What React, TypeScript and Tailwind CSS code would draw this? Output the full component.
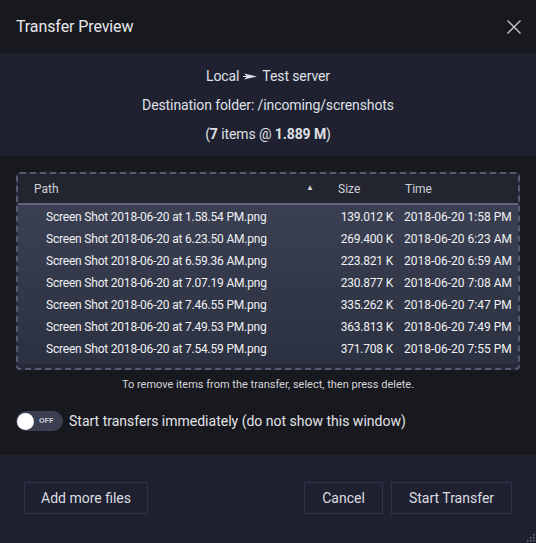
import React from 'react';

const rows = [
    { name: 'Screen Shot 2018-06-20 at 1.58.54 PM.png', size: '139.012 K', time: '2018-06-20 1:58 PM' },
    { name: 'Screen Shot 2018-06-20 at 6.23.50 AM.png', size: '269.400 K', time: '2018-06-20 6:23 AM' },
    { name: 'Screen Shot 2018-06-20 at 6.59.36 AM.png', size: '223.821 K', time: '2018-06-20 6:59 AM' },
    { name: 'Screen Shot 2018-06-20 at 7.07.19 AM.png', size: '230.877 K', time: '2018-06-20 7:08 AM' },
    { name: 'Screen Shot 2018-06-20 at 7.46.55 PM.png', size: '335.262 K', time: '2018-06-20 7:47 PM' },
    { name: 'Screen Shot 2018-06-20 at 7.49.53 PM.png', size: '363.813 K', time: '2018-06-20 7:49 PM' },
    { name: 'Screen Shot 2018-06-20 at 7.54.59 PM.png', size: '371.708 K', time: '2018-06-20 7:55 PM' },
];

const Button: React.FC<{ label: string; className?: string }> = ({ label, className }) => (
    <button className={`h-[32px] border border-[#30344a] text-[14px] text-[#dcdde2] ${className ?? ''}`}>{label}</button>
);

const App: React.FC = () => {
    return (
        <div className="w-[536px] h-[543px] bg-[#18191e] flex flex-col font-['Roboto',sans-serif] text-[#e4e5ea] overflow-hidden">
            {/* title bar */}
            <div className="h-[55px] flex items-center justify-between pl-[16px] pr-[14px] border-b border-[#22242b] shrink-0">
                <h1 className="text-[16px] text-[#e6e7ea] tracking-[-0.1px]">Transfer Preview</h1>
                <svg width="16" height="16" viewBox="0 0 16 16" className="text-[#c7c9d1]">
                    <path d="M1.5 1.5 L14.5 14.5 M14.5 1.5 L1.5 14.5" stroke="currentColor" strokeWidth="1.3" />
                </svg>
            </div>

            {/* summary */}
            <div className="h-[101px] bg-[#1f2130] flex flex-col items-center pt-[11px] text-[14px] text-[#dfe0e5] gap-[9px] shrink-0">
                <div className="leading-[20px] tracking-[-0.1px] flex items-center">
                    Local
                    <svg width="15" height="9" viewBox="0 0 15 9" className="mx-[4px] mt-[1px]">
                        <path d="M1 1.5 L14 4.5 L1 7.5 L4 4.5 Z" fill="#dfe0e5" />
                        <path d="M0 4.5 H6" stroke="#dfe0e5" strokeWidth="1" />
                    </svg>
                    Test server
                </div>
                <div className="leading-[20px] tracking-[-0.1px]">Destination folder: /incoming/screnshots</div>
                <div className="leading-[20px] tracking-[-0.1px]">
                    (<b className="font-bold">7</b> items @ <b className="font-bold">1.889 M</b>)
                </div>
            </div>

            {/* list section */}
            <div className="flex-1 flex flex-col px-[16px] pt-[16px]">
                <div className="h-[198px] rounded-[4px] border-2 border-dashed border-[#545b72] bg-[#262a38] overflow-hidden flex flex-col">
                    <div className="h-[29px] bg-[#22252f] flex items-center text-[12px] text-[#cfd1d8] shrink-0">
                        <div className="w-[298px] pl-[16px] flex justify-between pr-[2px]">
                            <span>Path</span>
                            <span className="text-[8px] mt-[2px]">▲</span>
                        </div>
                        <div className="w-[68px] pl-[22px]">Size</div>
                        <div className="pl-[21px]">Time</div>
                    </div>
                    <div className="h-[2px] bg-[#5f6679] shrink-0" />
                    <div className="bg-gradient-to-b from-[#3a4052] to-[#2c3141] pt-[1px] pb-[4px]">
                        {rows.map((r) => (
                            <div key={r.name} className="h-[22px] flex items-center text-[12px] text-[#f0f1f4]">
                                <div className="w-[298px] pl-[28px] whitespace-nowrap tracking-[-0.2px]">{r.name}</div>
                                <div className="w-[77px] text-right whitespace-nowrap tracking-[-0.2px]">{r.size}</div>
                                <div className="pl-[11px] whitespace-nowrap">{r.time}</div>
                            </div>
                        ))}
                    </div>
                </div>
                <p className="text-center text-[11px] text-[#d4d5da] mt-[7px]">To remove items from the transfer, select, then press delete.</p>
                <div className="flex items-center gap-[6px] mt-[17px]">
                    <div className="w-[47px] h-[20px] rounded-full bg-[#3a3f52] flex items-center pl-[1px]">
                        <div className="w-[17px] h-[17px] rounded-full bg-white" />
                        <span className="text-[8px] font-bold text-[#c9cbd4] ml-[5px]">OFF</span>
                    </div>
                    <span className="text-[14px] text-[#e2e3e8]">Start transfers immediately (do not show this window)</span>
                </div>
            </div>

            {/* footer */}
            <div className="h-[88px] bg-[#1f2130] flex items-center px-[24px] pb-[2px] relative shrink-0">
                <Button label="Add more files" className="w-[124px]" />
                <div className="flex-1" />
                <Button label="Cancel" className="w-[79px] mr-[8px]" />
                <Button label="Start Transfer" className="w-[121px]" />
                <svg width="10" height="10" viewBox="0 0 10 10" className="absolute right-[1px] bottom-[1px]">
                    {[[8, 2], [8, 5], [8, 8], [5, 5], [5, 8], [2, 8]].map(([x, y]) => (
                        <rect key={`${x}-${y}`} x={x} y={y} width="1.5" height="1.5" fill="#6b7080" />
                    ))}
                </svg>
            </div>
        </div>
    );
};

export default App;
